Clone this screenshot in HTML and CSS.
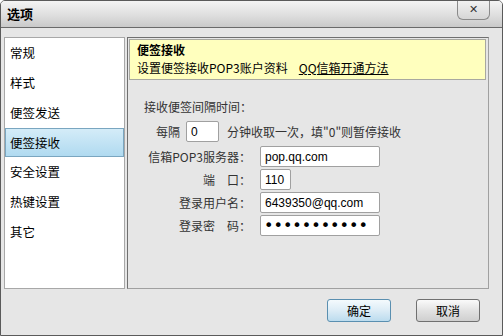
FILE: index.html
```html
<!DOCTYPE html>
<html lang="zh-CN">
<head>
    <meta charset="UTF-8">
    <title>选项</title>
    <link rel="stylesheet" href="styles.css">
</head>
<body>
    <div class="window">
        <div class="titlebar">
            <span class="title">选项</span>
            <button class="close">✕</button>
        </div>

        <div class="content">
            <ul class="menu">
                <li>常规</li>
                <li>样式</li>
                <li>便签发送</li>
                <li class="active">便签接收</li>
                <li>安全设置</li>
                <li>热键设置</li>
                <li>其它</li>
            </ul>

            <div class="panel">
                <div class="panel-head">
                    <div class="head-title">便签接收</div>
                    <div class="head-desc">设置便签接收POP3账户资料<a href="#">QQ信箱开通方法</a></div>
                </div>

                <div class="form">
                    <div class="section">接收便签间隔时间：</div>
                    <div class="interval">
                        <span>每隔</span>
                        <input type="text" class="small" value="0">
                        <span>分钟收取一次，填"0"则暂停接收</span>
                    </div>
                    <div class="fields">
                        <label>信箱POP3服务器：</label>
                        <input type="text" value="pop.qq.com">
                        <label>端　口：</label>
                        <input type="text" class="port" value="110">
                        <label>登录用户名：</label>
                        <input type="text" value="6439350@qq.com">
                        <label>登录密　码：</label>
                        <input type="password" class="pwd" value="12345678901">
                    </div>
                </div>
            </div>
        </div>

        <div class="footer">
            <button class="btn ok">确定</button>
            <button class="btn">取消</button>
        </div>
    </div>
</body>
</html>
```

FILE: styles.css
```css
* {
    box-sizing: border-box;
}

body {
    margin: 0;
    font-family: "Noto Sans CJK SC", "Liberation Sans", sans-serif;
    font-size: 12px;
    color: #000;
}

.window {
    width: 503px;
    height: 336px;
    background: #e6e6e6;
    border: 1px solid #5a5a5a;
    border-radius: 5px 5px 0 0;
    display: flex;
    flex-direction: column;
    overflow: hidden;
}

.titlebar {
    height: 27px;
    flex-shrink: 0;
    background: linear-gradient(#f4f4f4, #dcdcdc 60%, #c9c9c9);
    border-bottom: 1px solid #6a6a6a;
    display: flex;
    align-items: center;
    justify-content: space-between;
    padding-left: 6px;
    padding-right: 12px;
}

.title {
    font-weight: bold;
    font-size: 13px;
    margin-top: -1px;
}

.close {
    align-self: flex-start;
    margin-top: -1px;
    width: 33px;
    height: 20px;
    border: 1px solid #8a8a8a;
    border-top: none;
    border-radius: 0 0 6px 6px;
    background: linear-gradient(#f2f2f2, #d6d6d6);
    font-size: 11px;
    font-weight: bold;
    color: #333;
    padding: 0;
    font-family: "DejaVu Sans", sans-serif;
}

.content {
    display: flex;
    gap: 2px;
    padding: 9px 13px 0 3px;
    height: 261px;
}

.menu {
    list-style: none;
    margin: 0;
    padding: 0;
    width: 121px;
    height: 252px;
    background: #fff;
    border: 1px solid #a8a8a8;
}

.menu li {
    height: 30px;
    line-height: 30px;
    padding-left: 5px;
    font-size: 12.5px;
}

.menu li.active {
    height: 29px;
    line-height: 27px;
    background: linear-gradient(#d4ecf8, #b0daf0);
    border: 1px solid #7aa6c0;
    padding-left: 4px;
}

.panel {
    flex: 1;
    height: 252px;
    border: 1px solid #a0a0a0;
    border-left-color: #707070;
    border-top-color: #707070;
    padding: 1px 2px 0 1px;
}

.panel-head {
    height: 41px;
    background: #ffffbe;
    border: 1px solid #a8a8a0;
    padding: 1px 7px;
}

.head-title {
    font-weight: bold;
    line-height: 18px;
}

.head-desc {
    line-height: 18px;
}

.head-desc a {
    color: #000;
    margin-left: 11px;
}

.form {
    padding: 18px 0 0 15px;
    color: #333;
}

.section {
    line-height: 18px;
}

.interval {
    display: flex;
    align-items: center;
    gap: 6px;
    margin: 5px 0 0 12px;
}

.interval span:last-child {
    margin-left: 2px;
}

input {
    height: 21px;
    border: 1px solid #a0a0a0;
    border-radius: 2px;
    background: #fff;
    font-family: "Liberation Sans", sans-serif;
    font-size: 12px;
    padding: 0 4px;
    color: #000;
}

.small {
    width: 33px;
}

.fields {
    display: grid;
    grid-template-columns: 107px 120px;
    column-gap: 9px;
    row-gap: 2px;
    margin-top: 4px;
    align-items: center;
}

.fields label {
    text-align: right;
}

.fields input {
    width: 120px;
}

.fields input.port {
    width: 31px;
}

.fields input.pwd {
    font-family: "DejaVu Sans", sans-serif;
    font-size: 16px;
    letter-spacing: 0;
    padding: 0 3px;
}

.footer {
    flex: 1;
    display: flex;
    justify-content: flex-end;
    align-items: center;
    gap: 25px;
    padding: 0 22px 3px 0;
}

.btn {
    width: 64px;
    height: 23px;
    border: 1px solid #707070;
    border-radius: 3px;
    background: linear-gradient(#fafafa, #e2e2e2 50%, #cfcfcf);
    font-family: "Noto Sans CJK SC", sans-serif;
    font-size: 12px;
    padding: 0;
}

.btn.ok {
    border-color: #5a8fb0;
    background: linear-gradient(#f4fafd, #dcecf6 50%, #bcdcee);
}
```
